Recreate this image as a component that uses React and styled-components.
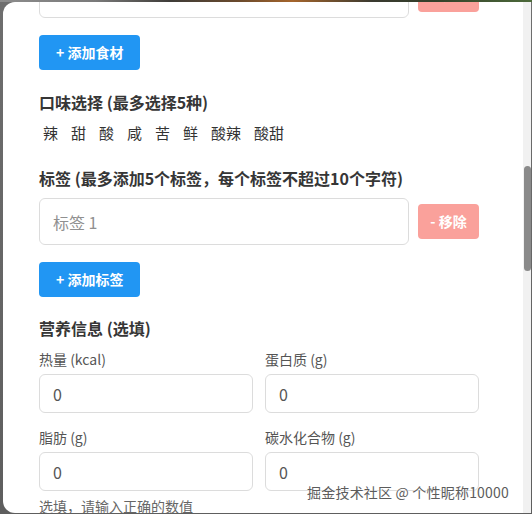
import React from "react";
import styled, { createGlobalStyle } from "styled-components";

const Global = createGlobalStyle`
  html, body { margin: 0; padding: 0; }
  body {
    width: 532px;
    height: 514px;
    overflow: hidden;
    font-family: "Noto Sans CJK SC", "Noto Sans", sans-serif;
  }
`;

const Backdrop = styled.div`
  position: relative;
  width: 532px;
  height: 514px;
  background: linear-gradient(180deg, #6e6e6e 0%, #5e5e5e 100%);
  display: flex;
  flex-direction: column;
  overflow: hidden;
`;

const PhotoStrip = styled.div`
  height: 2px;
  flex: none;
  background: linear-gradient(
    90deg,
    #8c8c8c 0%,
    #7a7a7a 18%,
    #3e3c38 32%,
    #6b4a2c 45%,
    #a5652c 55%,
    #3a3a30 70%,
    #33402a 82%,
    #4d6a3a 100%
  );
`;

const Modal = styled.div`
  margin-left: 3px;
  width: 528px;
  height: 511px;
  flex: none;
  background: #fff;
  border-radius: 12px 0 0 12px;
  overflow: hidden;
  display: flex;
`;

const Content = styled.div`
  flex: 1;
  padding: 0 44px 0 36px;
  display: flex;
  flex-direction: column;
  margin-top: -31px;
`;

const ScrollTrack = styled.div`
  width: 8px;
  flex: none;
  background: #f1f1f1;
  display: flex;
  flex-direction: column;
  padding-top: 164px;
  box-sizing: border-box;
`;

const ScrollThumb = styled.div`
  width: 7px;
  margin-left: 0.5px;
  height: 105px;
  border-radius: 4px;
  background: #8a8a8a;
`;

const Row = styled.div`
  display: flex;
  align-items: center;
  gap: 9px;
  margin-top: ${(p) => p.$mt || 0}px;
`;

const TextInput = styled.input`
  box-sizing: border-box;
  width: ${(p) => p.$w || "100%"};
  height: ${(p) => p.$h || 47}px;
  border: 1px solid #dcdcdc;
  border-radius: 6px;
  padding: 0 13px;
  font-family: inherit;
  font-size: 16px;
  color: #555;
  background: #fff;
  outline: none;
  &::placeholder { color: #909090; }
`;

const Button = styled.button`
  box-sizing: border-box;
  height: 35px;
  border: none;
  border-radius: 4px;
  padding: 0 ${(p) => (p.$danger ? 12 : 17)}px;
  background: ${(p) => (p.$danger ? "#faa19b" : "#2196f3")};
  color: #fff;
  font-family: inherit;
  font-size: 14px;
  font-weight: 700;
  line-height: 19px;
  flex: none;
  align-self: flex-start;
  margin-top: ${(p) => p.$mt || 0}px;
  cursor: pointer;
  white-space: nowrap;
`;

const RemoveButton = styled(Button)`
  align-self: center;
  width: 61px;
  padding: 0;
`;

const Heading = styled.h3`
  margin: ${(p) => p.$mt || 0}px 0 0;
  font-size: 16px;
  line-height: 22px;
  font-weight: 700;
  color: #363636;
`;

const TasteList = styled.div`
  display: flex;
  gap: 5px;
  margin-top: 9px;
`;

const Taste = styled.span`
  padding: 0 4px;
  font-size: 15px;
  line-height: 22px;
  color: #333;
`;

const Grid = styled.div`
  display: grid;
  grid-template-columns: 214px 214px;
  column-gap: 12px;
  margin-top: 10px;
`;

const Field = styled.div`
  display: flex;
  flex-direction: column;
  gap: 5px;
  margin-top: ${(p) => p.$mt || 0}px;
`;

const Label = styled.label`
  font-size: 14px;
  line-height: 20px;
  color: #555;
`;

const Helper = styled.div`
  margin-top: 5px;
  font-size: 14px;
  line-height: 20px;
  color: #666;
`;

const Watermark = styled.div`
  position: absolute;
  right: 23px;
  top: 482px;
  font-size: 14px;
  line-height: 20px;
  letter-spacing: 0.2px;
  color: #5c5c5c;
  text-shadow: 0 0 1px #fff, 0 0 1px #fff;
  white-space: nowrap;
  pointer-events: none;
`;

const tastes = ["辣", "甜", "酸", "咸", "苦", "鲜", "酸辣", "酸甜"];

const nutrition = [
  ["热量 (kcal)", "蛋白质 (g)"],
  ["脂肪 (g)", "碳水化合物 (g)"],
];

export default function App() {
  return (
    <>
      <Global />
      <Backdrop>
        <PhotoStrip />
        <Modal>
          <Content>
            <Row>
              <TextInput $w="370px" readOnly />
              <RemoveButton $danger>- 移除</RemoveButton>
            </Row>
            <Button $mt={17}>+ 添加食材</Button>

            <Heading $mt={21}>口味选择 (最多选择5种)</Heading>
            <TasteList>
              {tastes.map((t) => (
                <Taste key={t}>{t}</Taste>
              ))}
            </TasteList>

            <Heading $mt={23}>标签 (最多添加5个标签，每个标签不超过10个字符)</Heading>
            <Row $mt={9}>
              <TextInput $w="370px" placeholder="标签 1" />
              <RemoveButton $danger>- 移除</RemoveButton>
            </Row>
            <Button $mt={17}>+ 添加标签</Button>

            <Heading $mt={20}>营养信息 (选填)</Heading>
            <Grid>
              {nutrition.map((pair, i) =>
                pair.map((label) => (
                  <Field key={label} $mt={i === 0 ? 0 : 14}>
                    <Label>{label}</Label>
                    <TextInput $h={39} defaultValue="0" />
                  </Field>
                ))
              )}
            </Grid>
            <Helper>选填，请输入正确的数值</Helper>
          </Content>
          <ScrollTrack>
            <ScrollThumb />
          </ScrollTrack>
        </Modal>
        <Watermark>掘金技术社区 @ 个性昵称10000</Watermark>
      </Backdrop>
    </>
  );
}
